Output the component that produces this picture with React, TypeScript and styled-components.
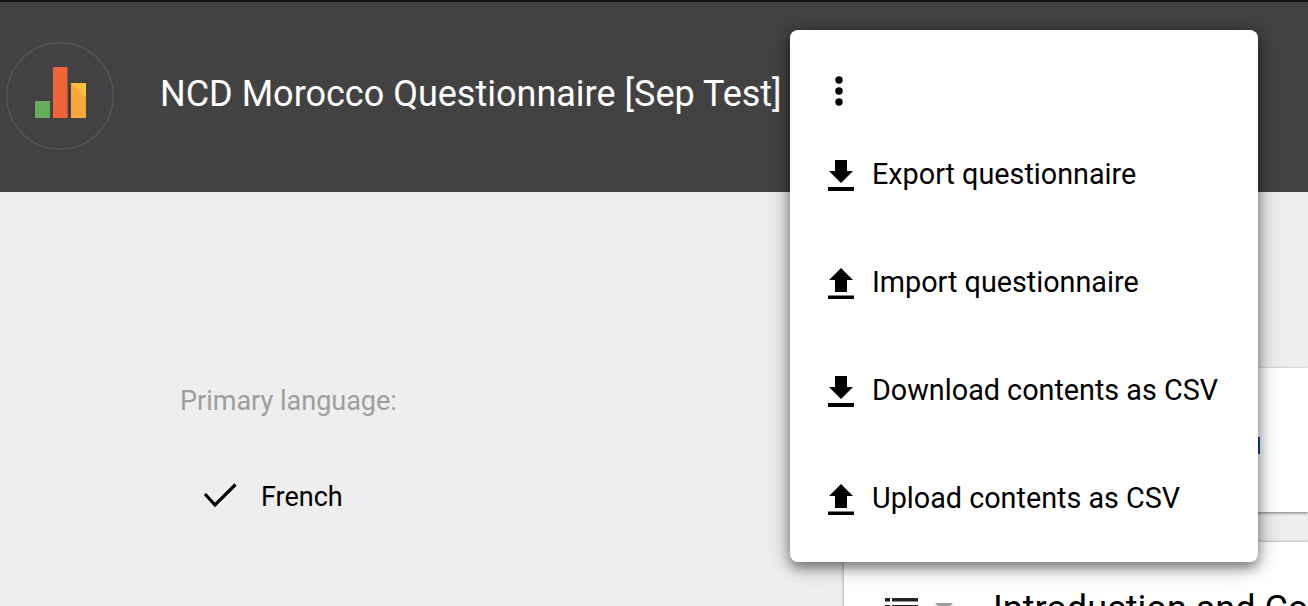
import React from "react";
import styled, { createGlobalStyle } from "styled-components";

const GlobalStyle = createGlobalStyle`
  html, body {
    margin: 0;
    padding: 0;
    height: 100%;
    overflow: hidden;
    background: #eeeeee;
    font-family: Roboto, "Liberation Sans", sans-serif;
  }
`;

const Page = styled.div`
  position: relative;
  width: 1308px;
  height: 606px;
  overflow: hidden;
  background: #eeeeee;
`;

const Header = styled.header`
  display: flex;
  align-items: center;
  height: 190px;
  background: #424242;
  border-top: 2px solid #111;
  padding-left: 6px;
`;

const LogoWrap = styled.div`
  flex: none;
  width: 108px;
  height: 108px;
  margin-top: -2px;
`;

const Title = styled.h1`
  margin: -6px 0 0 46px;
  font-size: 36px;
  font-weight: 400;
  color: #fff;
  white-space: nowrap;
`;

const Body = styled.div`
  display: flex;
  justify-content: space-between;
`;

const Sidebar = styled.aside`
  padding: 194px 0 0 180px;
`;

const SideLabel = styled.div`
  font-size: 27px;
  line-height: 30px;
  color: #9e9e9e;
`;

const LangRow = styled.div`
  display: flex;
  align-items: center;
  margin: 66px 0 0 22px;
  gap: 23px;
  font-size: 27px;
  line-height: 30px;
  color: #000;
`;

const Main = styled.main`
  width: 464px;
  padding-top: 176px;
`;

const TopCard = styled.section`
  position: relative;
  height: 144px;
  background: #fff;
  box-shadow: 0 1px 3px rgba(0, 0, 0, 0.5);
`;

const LinkMark = styled.span`
  position: absolute;
  left: 414px;
  top: 69px;
  width: 2px;
  height: 17px;
  background: #0d47a1;
`;

const SectionCard = styled.section`
  display: flex;
  align-items: flex-start;
  height: 64px;
  margin-top: 30px;
  padding: 56px 0 0 41px;
  background: #fff;
  box-shadow: 0 0 3px rgba(0, 0, 0, 0.4);

  > * {
    flex: none;
  }
`;

const SectionTitle = styled.span`
  margin: -9px 0 0 40px;
  font-size: 36px;
  line-height: 40px;
  color: #000;
  white-space: nowrap;
`;

const CaretWrap = styled.span`
  display: flex;
  margin: 5px 0 0 17px;
`;

const Menu = styled.div`
  position: absolute;
  left: 790px;
  top: 30px;
  width: 468px;
  height: 532px;
  box-sizing: border-box;
  padding-top: 45px;
  background: #fff;
  border-radius: 8px;
  box-shadow: 0 6px 12px rgba(0, 0, 0, 0.4), 0 2px 24px rgba(0, 0, 0, 0.3);
`;

const MenuTrigger = styled.div`
  height: 45px;
  padding-left: 33px;
`;

const MenuList = styled.ul`
  list-style: none;
  margin: 0;
  padding: 0;
`;

const MenuItem = styled.li`
  display: flex;
  align-items: center;
  height: 108px;
  gap: 15px;
  padding-left: 33px;
  font-size: 28.75px;
  color: #000;
  white-space: nowrap;
`;

const Logo = () => (
  <svg width="108" height="108" viewBox="0 0 108 108">
    <circle cx="54" cy="54" r="53.2" fill="none" stroke="#555" strokeWidth="1.4" />
    <rect x="29" y="59" width="15" height="17" fill="#66ad5b" />
    <rect x="47" y="25" width="14.5" height="51" fill="#f06237" />
    <rect x="65" y="41" width="15" height="35" fill="#f8a73b" />
    <polygon points="65,41 80,41 80,56" fill="#fcc03c" />
  </svg>
);

const Dots = () => (
  <svg width="32" height="32" viewBox="0 0 32 32" fill="#000">
    <circle cx="16" cy="5" r="3.7" />
    <circle cx="16" cy="16" r="3.7" />
    <circle cx="16" cy="27" r="3.7" />
  </svg>
);

const Download = () => (
  <svg width="34" height="36" viewBox="0 0 34 36" fill="#000">
    <path d="M12 4h12v11h6L18 27 6 15h6z" />
    <rect x="5" y="31" width="26" height="4" />
  </svg>
);

const Upload = () => (
  <svg width="34" height="36" viewBox="0 0 34 36" fill="#000">
    <path d="M12 28h12V16h6L18 4 6 16h6z" />
    <rect x="5" y="31.5" width="26" height="3.5" />
  </svg>
);

const Check = () => (
  <svg width="36" height="28" viewBox="0 0 36 28" fill="none" stroke="#000" strokeWidth="3.2">
    <path d="M3 11l10 11L33.5 1.5" />
  </svg>
);

const ListIcon = () => (
  <svg width="33" height="30" viewBox="0 0 33 30" fill="#222">
    <rect x="0" y="0" width="5" height="3.5" />
    <rect x="7" y="0" width="26" height="3.5" />
    <rect x="0" y="7" width="5" height="3.5" />
    <rect x="7" y="7" width="26" height="3.5" />
    <rect x="0" y="14" width="5" height="3.5" />
    <rect x="7" y="14" width="26" height="3.5" />
  </svg>
);

const Caret = () => (
  <svg width="18" height="10" viewBox="0 0 18 10" fill="#9e9e9e">
    <path d="M0 0h18L9 10z" />
  </svg>
);

const items = [
  { label: "Export questionnaire", icon: <Download /> },
  { label: "Import questionnaire", icon: <Upload /> },
  { label: "Download contents as CSV", icon: <Download /> },
  { label: "Upload contents as CSV", icon: <Upload /> },
];

export default function App() {
  return (
    <Page>
      <GlobalStyle />
      <Header>
        <LogoWrap>
          <Logo />
        </LogoWrap>
        <Title>NCD Morocco Questionnaire [Sep Test]</Title>
      </Header>
      <Body>
        <Sidebar>
          <SideLabel>Primary language:</SideLabel>
          <LangRow>
            <Check />
            French
          </LangRow>
        </Sidebar>
        <Main>
          <TopCard>
            <LinkMark />
          </TopCard>
          <SectionCard>
            <ListIcon />
            <CaretWrap>
              <Caret />
            </CaretWrap>
            <SectionTitle>Introduction and Consent</SectionTitle>
          </SectionCard>
        </Main>
      </Body>
      <Menu>
        <MenuTrigger>
          <Dots />
        </MenuTrigger>
        <MenuList>
          {items.map((item) => (
            <MenuItem key={item.label}>
              {item.icon}
              {item.label}
            </MenuItem>
          ))}
        </MenuList>
      </Menu>
    </Page>
  );
}
